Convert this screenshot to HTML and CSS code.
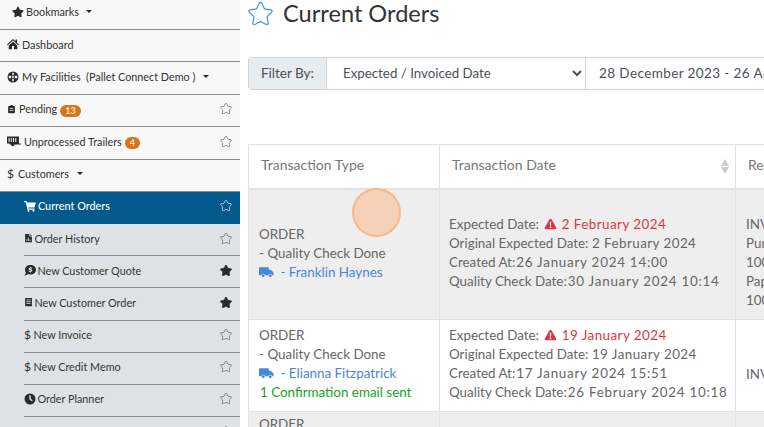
FILE: index.html
```html
<!DOCTYPE html>
<html>
<head>
    <meta charset="utf-8">
    <link rel="stylesheet" href="styles.css">
</head>
<body>
    <svg class="icon-defs" xmlns="http://www.w3.org/2000/svg">
        <symbol id="star" viewBox="0 0 576 512"><path d="M259.3 17.8L194 150.2 47.9 171.5c-26.2 3.8-36.7 36.1-17.7 54.6l105.7 103-25 145.5c-4.5 26.3 23.2 46 46.4 33.7L288 439.6l130.7 68.7c23.2 12.2 50.9-7.4 46.4-33.7l-25-145.5 105.7-103c19-18.5 8.5-50.8-17.7-54.6L382 150.2 316.7 17.8c-11.7-23.6-45.6-23.9-57.4 0z"/></symbol>
        <symbol id="home" viewBox="0 0 24 24"><path d="M12 2 0 13l1.5 1.6L12 5l10.500 9.600L24 13l-4-3.700V3h-3v3.500zM3.500 15v7.500H10V16h4v6.500h6.500V15L12 7.300z"/></symbol>
        <symbol id="globe" viewBox="0 0 24 24"><path fill-rule="evenodd" d="M12 1a11 11 0 1 0 0 22 11 11 0 0 0 0-22zM10.500 3.500h3V8h-3zM3.500 9.500h4.800v5H3.500zM10.500 9.500h3v5h-3zM15.700 9.500h4.800v5h-4.800zM10.500 16h3v4.500h-3z"/></symbol>
        <symbol id="clipboard" viewBox="0 0 24 24"><path fill-rule="evenodd" d="M9 1h6v3h4a2 2 0 0 1 2 2v15a2 2 0 0 1-2 2H5a2 2 0 0 1-2-2V6a2 2 0 0 1 2-2h4zM7 10v2h10v-2zM7 15v2h10v-2z"/></symbol>
        <symbol id="trailer" viewBox="0 0 28 24"><path fill-rule="evenodd" d="M0 3h24v14h4v2H15a3.500 3.500 0 0 1-7 0H5v-2H0zM3 6v8h2V6zM7.500 6v8h2V6zM12 6v8h2V6zM16.500 6v8h2V6z"/></symbol>
        <symbol id="cart" viewBox="0 0 24 24"><path d="M0 2h5l1 3h18l-3 10H8.500l.5 2h12v2.500H7L3.500 4.500H0z"/><circle cx="9" cy="21.500" r="2"/><circle cx="19" cy="21.500" r="2"/></symbol>
        <symbol id="file" viewBox="0 0 24 24"><path fill-rule="evenodd" d="M3 1h11v7h7v15H3zM16 1l5 5h-5zM7 14v6h2v-6zM11 11v9h2v-9zM15 16v4h2v-4z"/></symbol>
        <symbol id="comment" viewBox="0 0 24 24"><path fill-rule="evenodd" d="M13 2c6 0 11 4 11 9.500S19 21 13 21c-1.500 0-3-.3-4.300-.8C7 21.600 4 23 .5 23c1.800-1.800 3-4 3.200-5.500A9 9 0 0 1 2 11.500C2 6 7 2 13 2zM12 6v1.300c-1.600.3-2.600 1.300-2.600 2.600 0 3 4.600 2 4.600 3.300 0 .6-1 .8-2.500.5l-1.800-.6-.5 1.800c.8.400 1.800.6 2.800.7V17h2v-1.400c1.600-.3 2.600-1.300 2.600-2.600 0-3-4.600-2-4.600-3.300 0-.6 1-.8 2.300-.5l1.500.4.500-1.800c-.6-.2-1.300-.4-1.800-.4V6z"/></symbol>
        <symbol id="list" viewBox="0 0 24 24"><path fill-rule="evenodd" d="M3 1h18v22H3zM6.500 5v2.500h11V5zM6.500 10v2.500h11V10zM6.500 15v2.500h11V15z"/></symbol>
        <symbol id="clock" viewBox="0 0 24 24"><path fill-rule="evenodd" d="M12 1a11 11 0 1 0 0 22 11 11 0 0 0 0-22zM10.500 5h3v6.300l4 3-1.700 2.300-5.300-4z"/></symbol>
        <symbol id="truck" viewBox="0 0 32 24"><path d="M2 2h17a2 2 0 0 1 2 2v3h4l6 6v6h-3.100a4 4 0 0 0-7.800 0h-7.200a4 4 0 0 0-7.800 0H0V4a2 2 0 0 1 2-2z"/><circle cx="9" cy="20" r="3"/><circle cx="24" cy="20" r="3"/></symbol>
        <symbol id="warning" viewBox="0 0 24 24"><path fill-rule="evenodd" d="M12 1.500c.9 0 1.600.5 2 1.200l9.500 17c.8 1.500-.2 3-2 3h-19c-1.800 0-2.800-1.500-2-3l9.500-17c.4-.7 1.100-1.200 2-1.200zM10.500 7.500l.4 8h2.200l.4-8zM12 16.800a1.800 1.800 0 1 0 0 3.600 1.800 1.800 0 0 0 0-3.600z"/></symbol>
    </svg>

    <div class="sidebar">
        <div class="nav-item nav-bookmarks">
            <svg class="nav-icon"><use href="#star"/></svg>
            <span>Bookmarks</span><span class="caret"></span>
        </div>
        <div class="nav-item">
            <svg class="nav-icon"><use href="#home"/></svg>
            <span>Dashboard</span>
        </div>
        <div class="nav-item">
            <svg class="nav-icon"><use href="#globe"/></svg>
            <span>My Facilities&nbsp; (Pallet Connect Demo )</span><span class="caret"></span>
        </div>
        <div class="nav-item">
            <svg class="nav-icon nav-icon-small"><use href="#clipboard"/></svg>
            <span>Pending</span><span class="badge">13</span>
            <svg class="fav"><use href="#star"/></svg>
        </div>
        <div class="nav-item">
            <svg class="nav-icon nav-icon-wide"><use href="#trailer"/></svg>
            <span>Unprocessed Trailers</span><span class="badge">4</span>
            <svg class="fav"><use href="#star"/></svg>
        </div>
        <div class="nav-item">
            <span class="dollar">$</span>
            <span>Customers</span><span class="caret"></span>
        </div>
        <div class="nav-item active">
            <svg class="nav-icon"><use href="#cart"/></svg>
            <span>Current Orders</span>
            <svg class="fav"><use href="#star"/></svg>
        </div>
        <div class="sub-list">
            <div class="nav-item">
                <svg class="nav-icon nav-icon-small"><use href="#file"/></svg>
                <span>Order History</span>
                <svg class="fav"><use href="#star"/></svg>
            </div>
            <div class="nav-item">
                <svg class="nav-icon"><use href="#comment"/></svg>
                <span>New Customer Quote</span>
                <svg class="fav fav-on"><use href="#star"/></svg>
            </div>
            <div class="nav-item">
                <svg class="nav-icon nav-icon-small"><use href="#list"/></svg>
                <span>New Customer Order</span>
                <svg class="fav fav-on"><use href="#star"/></svg>
            </div>
            <div class="nav-item">
                <span class="dollar">$</span>
                <span>New Invoice</span>
                <svg class="fav"><use href="#star"/></svg>
            </div>
            <div class="nav-item">
                <span class="dollar">$</span>
                <span>New Credit Memo</span>
                <svg class="fav"><use href="#star"/></svg>
            </div>
            <div class="nav-item">
                <svg class="nav-icon"><use href="#clock"/></svg>
                <span>Order Planner</span>
                <svg class="fav"><use href="#star"/></svg>
            </div>
            <div class="nav-item">
                <svg class="nav-icon nav-icon-small"><use href="#list"/></svg>
                <span>Order Templates</span>
                <svg class="fav"><use href="#star"/></svg>
            </div>
        </div>
    </div>

    <div class="main">
        <div class="title-row">
            <svg class="title-star"><use href="#star"/></svg>
            <h1>Current Orders</h1>
        </div>

        <div class="filter-group">
            <div class="filter-label">Filter By:</div>
            <select class="filter-select">
                <option>Expected / Invoiced Date</option>
            </select>
            <div class="filter-date">28 December 2023 - 26 April 2024</div>
        </div>

        <table class="orders">
            <thead>
                <tr>
                    <th class="col-type">Transaction Type</th>
                    <th class="col-date">
                        Transaction Date
                        <span class="sort"><i class="sort-up"></i><i class="sort-down"></i></span>
                    </th>
                    <th class="col-ref">Reference</th>
                </tr>
            </thead>
            <tbody>
                <tr class="row-shaded row-tall">
                    <td>
                        ORDER<br>
                        - Quality Check Done<br>
                        <a class="customer"><svg class="truck"><use href="#truck"/></svg> - Franklin Haynes</a>
                    </td>
                    <td class="cell-dates">
                        Expected Date: <span class="late"><svg class="warn"><use href="#warning"/></svg> <span class="num">2 February 2024</span></span><br>
                        Original Expected Date: <span class="num">2 February 2024</span><br>
                        Created At:<span class="num-time">26 January 2024 14:00</span><br>
                        Quality Check Date:<span class="num-time">30 January 2024 10:14</span>
                    </td>
                    <td class="cell-ref">
                        INVOICE<br>
                        Purchase Order<br>
                        1001<br>
                        Paperwork<br>
                        1002
                    </td>
                </tr>
                <tr class="row-mid">
                    <td>
                        ORDER<br>
                        - Quality Check Done<br>
                        <a class="customer"><svg class="truck"><use href="#truck"/></svg> - Elianna Fitzpatrick</a><br>
                        <span class="sent">1 Confirmation email sent</span>
                    </td>
                    <td class="cell-dates">
                        Expected Date: <span class="late"><svg class="warn"><use href="#warning"/></svg> <span class="num">19 January 2024</span></span><br>
                        Original Expected Date: <span class="num">19 January 2024</span><br>
                        Created At:<span class="num-time">17 January 2024 15:51</span><br>
                        Quality Check Date:<span class="num-time">26 February 2024 10:18</span>
                    </td>
                    <td class="cell-single">INVOICE</td>
                </tr>
                <tr class="row-shaded row-last">
                    <td>ORDER</td>
                    <td></td>
                    <td></td>
                </tr>
            </tbody>
        </table>
    </div>

    <div class="click-marker"></div>
</body>
</html>
```

FILE: styles.css
```css
* {
    box-sizing: border-box;
    margin: 0;
    padding: 0;
}

body {
    display: flex;
    width: 764px;
    height: 427px;
    overflow: hidden;
    font-family: Lato, 'Open Sans', sans-serif;
    background: white;
    color: #555;
}

.icon-defs {
    display: none;
}

.sidebar {
    width: 240px;
    height: 427px;
    flex-shrink: 0;
    overflow: hidden;
    background: #f8f8f8;
    font-size: 10.800px;
    color: #333;
}

.nav-item {
    display: flex;
    align-items: center;
    height: 32.400px;
    padding: 0 8px 3px 7px;
    border-bottom: 1px solid #8a8a8a;
    gap: 3px;
    white-space: nowrap;
}

.nav-bookmarks {
    height: 30px;
    padding-left: 12px;
    padding-bottom: 6px;
    gap: 2px;
}

.nav-icon {
    width: 12px;
    height: 12px;
    fill: #2b2b2b;
    flex-shrink: 0;
}

.nav-icon-small {
    width: 9px;
}

.nav-icon-wide {
    width: 14px;
}

.dollar {
    color: #2b2b2b;
    font-size: 12px;
    margin-right: 1px;
}

.caret {
    width: 0;
    height: 0;
    margin-left: 5px;
    border-top: 3px solid #2b2b2b;
    border-left: 3px solid transparent;
    border-right: 3px solid transparent;
}

.badge {
    margin-top: 4px;
    padding: 0 5px;
    border-radius: 7px;
    background: #d9741c;
    color: #fbe3cc;
    font-size: 9px;
    line-height: 12px;
    font-weight: 700;
}

.fav {
    width: 12px;
    height: 11px;
    margin-left: auto;
    fill: none;
    stroke: #555;
    stroke-width: 30px;
    overflow: visible;
}

.fav-on {
    fill: #2b2b2b;
    stroke: #2b2b2b;
}

.sub-list {
    background: #dee2e6;
    height: 240px;
    padding-left: 24px;
}

.sub-list .nav-item {
    height: 32.200px;
    padding-left: 0;
    gap: 1.500px;
}

.active {
    height: 32px;
    padding-left: 24px;
    padding-bottom: 4px;
    gap: 2px;
    background: #03588c;
    color: white;
    border-bottom: none;
    font-weight: 500;
}

.active .nav-icon {
    fill: white;
}

.active .fav {
    stroke: white;
}

.main {
    flex: 1;
    min-width: 0;
    padding-left: 8px;
}

.title-row {
    display: flex;
    align-items: center;
    height: 57px;
    padding-bottom: 31px;
    gap: 10px;
}

.title-star {
    width: 25px;
    height: 23px;
    fill: none;
    stroke: #4a90d9;
    stroke-width: 28px;
    overflow: visible;
}

h1 {
    font-size: 23.600px;
    font-weight: 400;
    line-height: 26px;
    color: #333;
    white-space: nowrap;
}

.filter-group {
    display: flex;
    width: 560px;
    height: 33px;
    border: 1px solid #ced4da;
    border-right: none;
    border-radius: 4px 0 0 4px;
    font-size: 13.500px;
}

.filter-label {
    display: flex;
    align-items: center;
    width: 78px;
    padding: 0 0 2px 12px;
    background: #e9ecef;
    border-right: 1px solid #ced4da;
    color: #495057;
    flex-shrink: 0;
}

.filter-select {
    width: 259px;
    padding: 0 0 2px 12px;
    border: none;
    border-right: 1px solid #ced4da;
    background: white;
    color: #495057;
    font-family: inherit;
    font-size: 13.300px;
    flex-shrink: 0;
}

.filter-date {
    display: flex;
    align-items: center;
    padding: 0 0 2px 13px;
    color: #495057;
    white-space: nowrap;
    letter-spacing: 0.400px;
}

.orders {
    width: 780px;
    margin-top: 54px;
    table-layout: fixed;
    border-collapse: collapse;
    font-size: 13.400px;
    line-height: 19px;
    color: #666;
}

.orders th {
    position: relative;
    height: 44px;
    padding: 0 12px 3px;
    text-align: left;
    font-size: 14px;
    font-weight: 400;
    color: #777;
    border: 1px solid #dee2e6;
    border-bottom-width: 2px;
    white-space: nowrap;
}

.col-type {
    width: 191px;
}

.col-date {
    width: 296px;
}

.orders td {
    padding: 0 10px;
    vertical-align: middle;
    border: 1px solid #dee2e6;
    white-space: nowrap;
    overflow: hidden;
}

.orders .row-tall td {
    padding-bottom: 2px;
}

.orders .row-mid td {
    padding-bottom: 3px;
}

.row-tall {
    height: 131px;
}

.row-mid {
    height: 92px;
}

.row-last {
    height: 60px;
}

.orders .row-last td {
    vertical-align: top;
    padding-top: 3px;
}

.row-shaded {
    background: #eeeeee;
}

.orders .cell-dates {
    padding-left: 9px;
}

.orders .row-tall .cell-ref {
    vertical-align: top;
    padding-top: 25px;
}

.orders .row-mid .cell-single {
    padding-top: 18px;
    padding-bottom: 0;
}

.num {
    letter-spacing: 0.450px;
}

.num-time {
    letter-spacing: 0.750px;
    margin-left: 1px;
}

.customer {
    color: #4a86d8;
}

.truck {
    width: 15px;
    height: 12px;
    margin-right: 3px;
    fill: #4a86d8;
    vertical-align: -1px;
}

.late {
    color: #dc3545;
}

.warn {
    width: 13px;
    height: 12px;
    margin: 0 1px 0 2px;
    fill: #dc3545;
    vertical-align: -1px;
}

.sent {
    margin-left: 1px;
    color: #22a022;
}

.sort {
    position: absolute;
    right: 6px;
    top: 14px;
    display: flex;
    flex-direction: column;
    gap: 1px;
}

.sort-up {
    border-bottom: 7px solid #ccc;
    border-left: 4px solid transparent;
    border-right: 4px solid transparent;
}

.sort-down {
    border-top: 7px solid #ccc;
    border-left: 4px solid transparent;
    border-right: 4px solid transparent;
}

.click-marker {
    position: absolute;
    left: 352px;
    top: 188px;
    width: 49px;
    height: 49px;
    border-radius: 50%;
    background: rgba(250, 190, 150, 0.6);
    border: 2px solid #f8b888;
}
```
